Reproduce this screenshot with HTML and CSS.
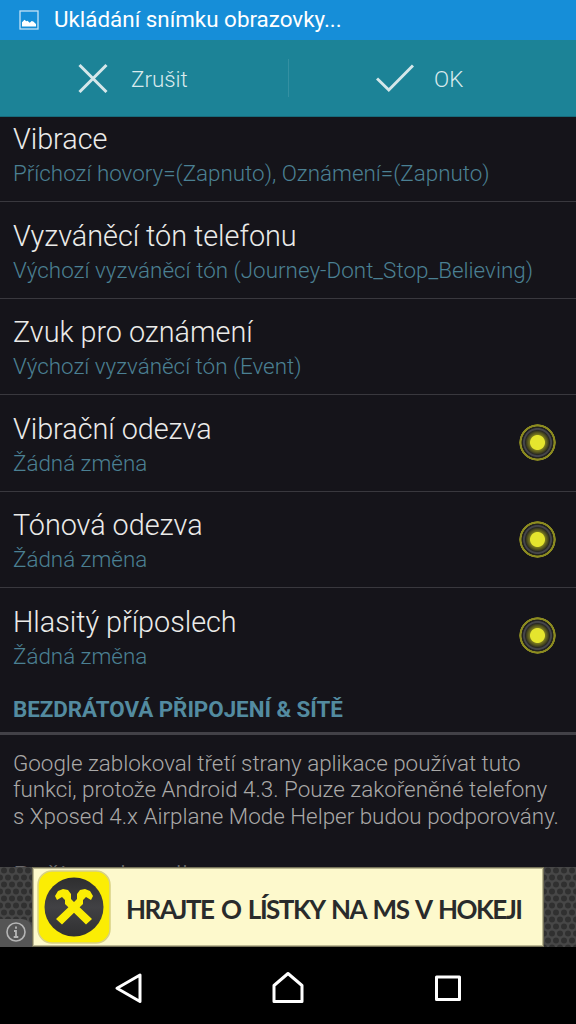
FILE: index.html
```html
<!DOCTYPE html>
<html lang="cs">
<head>
<meta charset="utf-8">
<title>Nastavení profilu</title>
<link rel="stylesheet" href="styles.css">
</head>
<body>
<div class="screen">
  <header class="status">
    <svg class="status-icon" width="20" height="20" viewBox="0 0 20 20"><rect x="1" y="1" width="18" height="18" fill="none" stroke="#c4e2f6" stroke-width="1.3"/><path d="M3 16.5v-4.2l2.5-2.5 1.8 1.5 1.2-.5 2.2 2 2-1.8 1.6.4 2.7 2.6v2.5z" fill="#fff"/></svg>
    <span class="status-text">Ukládání snímku obrazovky...</span>
  </header>
  <div class="actions">
    <button class="action cancel"><svg width="30" height="30" viewBox="0 0 30 30"><path d="M1.5 2 28.5 29M28.5 2 1.5 29"/></svg><span>Zrušit</span></button>
    <button class="action ok"><svg width="38" height="30" viewBox="0 0 38 30"><path d="M1 15.5 12.8 27 37 2.5"/></svg><span>OK</span></button>
  </div>
  <main class="list">
    <div class="row first"><div><h2>Vibrace</h2><p>Příchozí hovory=(Zapnuto), Oznámení=(Zapnuto)</p></div></div>
    <div class="row"><div><h2>Vyzváněcí tón telefonu</h2><p class="long">Výchozí vyzváněcí tón (Journey-Dont_Stop_Believing)</p></div></div>
    <div class="row"><div><h2>Zvuk pro oznámení</h2><p>Výchozí vyzváněcí tón (Event)</p></div></div>
    <div class="row"><div><h2>Vibrační odezva</h2><p>Žádná změna</p></div><span class="knob"></span></div>
    <div class="row"><div><h2>Tónová odezva</h2><p>Žádná změna</p></div><span class="knob"></span></div>
    <div class="row last"><div><h2>Hlasitý příposlech</h2><p>Žádná změna</p></div><span class="knob"></span></div>
    <h3 class="section">BEZDRÁTOVÁ PŘIPOJENÍ &amp; SÍTĚ</h3>
    <p class="note">Google zablokoval třetí strany aplikace používat tuto<br>funkci, protože Android 4.3. Pouze zakořeněné telefony<br>s Xposed 4.x Airplane Mode Helper budou podporovány.</p>
    <h2 class="peek">Režim v letadle</h2>
  </main>
  <aside class="ad">
    <svg class="mesh" width="576" height="80"><defs><pattern id="mesh" width="8" height="14" patternUnits="userSpaceOnUse"><rect width="8" height="14" fill="#474747"/><g fill="#303030"><circle cx="4" cy="3.5" r="3"/><circle cx="0" cy="10.5" r="3"/><circle cx="8" cy="10.5" r="3"/></g></pattern></defs><rect width="576" height="80" fill="url(#mesh)"/></svg>
    <span class="info"><svg width="20" height="20" viewBox="0 0 20 20"><circle cx="10" cy="10" r="9" fill="none" stroke="#b5b5b5" stroke-width="1.6"/><path d="M10 4.5v2.2M8 9h2v6M7.7 15h4.6" fill="none" stroke="#b5b5b5" stroke-width="1.8"/></svg></span>
    <div class="banner">
      <svg class="logo" width="74" height="74" viewBox="0 0 74 74">
        <defs><linearGradient id="disc" x2="0" y2="1"><stop offset="0" stop-color="#2e2e2f"/><stop offset=".5" stop-color="#414144"/><stop offset="1" stop-color="#303031"/></linearGradient></defs>
        <rect x="1" y="1" width="72" height="72" rx="14" fill="#fbed04" stroke="#d8d183" stroke-width="1.5"/>
        <circle cx="37" cy="37" r="29.5" fill="url(#disc)"/>
        <g fill="#fbed04"><path d="M20 30 18 26 21 21 26 19 31 20 34 24 34 29 37 32 55 49 49 54.5 28 34 28 30 25 27Z"/><path d="M54 30 56 26 53 21 48 19 43 20 40 24 40 29 37 32 19 49 25 54.5 46 34 46 30 49 27Z"/></g>
      </svg>
      <span class="banner-text">HRAJTE O LÍSTKY NA MS V HOKEJI</span>
    </div>
  </aside>
  <nav class="nav">
    <svg width="192" height="77" viewBox="0 0 192 77"><path d="M117 41.3 140 28V54.5Z"/></svg>
    <svg width="192" height="77" viewBox="0 0 192 77"><path d="M82 38.5 96 26.5 110 38.5V54.6H82Z"/></svg>
    <svg width="192" height="77" viewBox="0 0 192 77"><path d="M52.5 30H75.5V52.5H52.5Z"/></svg>
  </nav>
</div>
</body>
</html>
```

FILE: styles.css
```css
* { box-sizing: border-box; }
body, h2, h3, p { margin: 0; }
body { background: #000; font-family: Roboto, sans-serif; font-weight: 300; }
.screen { width: 576px; height: 1024px; display: flex; flex-direction: column; overflow: hidden; }
.status { height: 40px; flex: none; background: #168ed8; display: flex; align-items: center; padding-left: 19px; gap: 15px; }
.status-icon { margin-top: -1px; }
.status-text { margin-top: -2px; color: #fff; font-size: 22.4px; font-weight: 400; white-space: nowrap; }
.actions { height: 77px; flex: none; background: #1c8397; border-bottom: 1px solid #176b7b; display: flex; }
.action { width: 288px; border: 0; padding: 0 0 0 78px; background: none; display: flex; align-items: center; gap: 23px; color: #d9eaed; font: 300 22.4px Roboto, sans-serif; }
.action svg { fill: none; stroke: #d5e7ea; stroke-width: 3; flex: none; }
.action span { padding-top: 2px; }
.ok { padding-left: 88px; gap: 20px; background: linear-gradient(#3490a2, #3490a2) 0 19px / 1px 38px no-repeat; }
.list { flex: 1; min-height: 0; overflow: hidden; background: #15141a; }
.row { height: 96.5px; padding: 16.9px 20px 0 13px; border-bottom: 1px solid #39383e; display: flex; justify-content: space-between; white-space: nowrap; }
.first { height: 85px; padding-top: 5px; }
.last { border-bottom: 0; height: 97px; }
h2 { font-size: 28.8px; line-height: 34px; font-weight: 300; color: #ebebe9; letter-spacing: -.03px; }
.row p { font-size: 22.4px; line-height: 26px; margin-top: 4px; color: #4b8093; }
.row .long { letter-spacing: .03px; }
.knob { width: 37px; height: 37px; margin-top: 12.4px; border-radius: 50%; flex: none; background: radial-gradient(circle closest-side, #e5e52e 0 38%, #77771f 43%, #45451f 58%, #292922 65%, #45454a 71% 76%, #222222 80%, #24241c 85%, #8c8b20 88% 97%, transparent 100%); }
.section { height: 50px; padding: 10px 0 0 13px; border-bottom: 3px solid #424147; font-size: 22.4px; line-height: 28px; font-weight: 700; color: #538ba0; white-space: nowrap; letter-spacing: -.05px; }
.note { padding: 15px 0 0 13px; font-size: 22.4px; line-height: 26.25px; color: #aaa9a8; white-space: nowrap; }
.peek { padding: 31px 0 0 13px; color: #68686b; }
.ad { height: 80px; flex: none; display: grid; grid-template-columns: 32px 512px 32px; position: relative; }
.mesh { position: absolute; inset: 0; }
.info { position: relative; align-self: end; height: 28px; width: 32px; background: #555; border-top-right-radius: 10px; padding: 3px 6px; }
.info svg { display: block; }
.banner { position: relative; background: #fdf9cc; border: 1px solid #77745a; display: flex; align-items: center; padding-left: 4px; gap: 15px; box-shadow: inset 0 0 0 1px #bdb993; }
.logo { flex: none; }
.banner-text { padding-top: 3px; font-family: Lato, sans-serif; font-weight: 700; font-size: 26px; letter-spacing: -1.5px; word-spacing: 2.6px; color: #292b2b; white-space: nowrap; }
.nav { height: 77px; flex: none; display: flex; background: #000; }
.nav path { fill: none; stroke: #fff; stroke-width: 3; stroke-linejoin: round; }
```
